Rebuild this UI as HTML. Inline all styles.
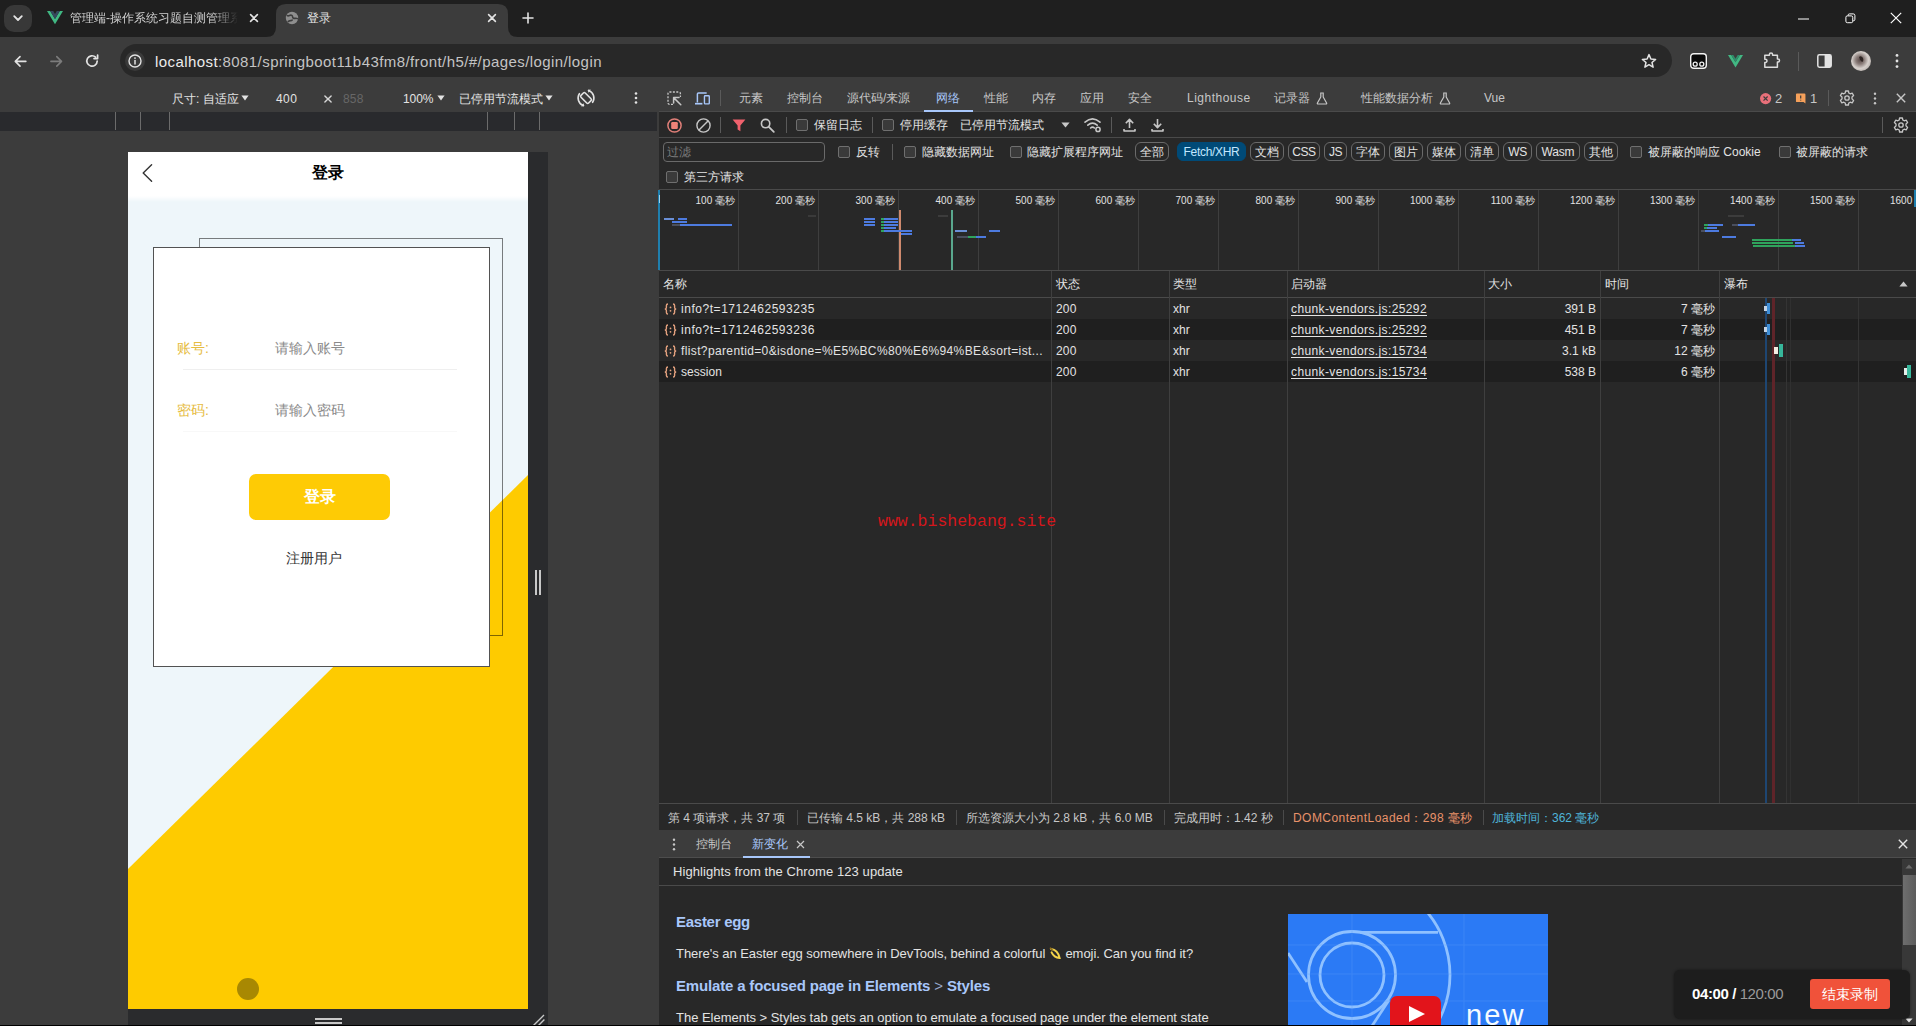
<!DOCTYPE html>
<html lang="zh">
<head>
<meta charset="utf-8">
<title>登录</title>
<style>
*{box-sizing:border-box;margin:0;padding:0}
html,body{width:1916px;height:1026px;overflow:hidden;background:#3c3c3c}
body{position:relative;font-family:"Liberation Sans",sans-serif;font-size:12px;color:#e3e3e3;line-height:1}
.a{position:absolute;white-space:nowrap}
svg{position:absolute;overflow:visible}
/* chrome frame */
#tabstrip{left:0;top:0;width:1916px;height:37px;background:#1f1f1f}
#toolbar{left:0;top:37px;width:1916px;height:47px;background:#3c3c3c}
#omni{left:120px;top:44px;width:1552px;height:33px;border-radius:17px;background:#282828}
/* device emulation */
#devbar{left:0;top:84px;width:658px;height:28px;background:#3c3c3c}
#ruler{left:0;top:112px;width:657px;height:19px;background:#292a2d}
#stage{left:0;top:131px;width:658px;height:895px;background:#3c3c3c}
#phone{left:128px;top:152px;width:400px;height:857px;background:#eef6fa;overflow:hidden}
/* devtools */
#dt{left:659px;top:84px;width:1257px;height:942px;background:#282828}
.t12{font-size:12px}

.t{position:absolute;white-space:nowrap;height:20px;line-height:20px;font-size:12px;color:#e3e3e3}
.dim{color:#c7c7c7}
.ic{stroke:#e3e3e3;fill:none;stroke-width:1.5;stroke-linecap:round;stroke-linejoin:round}

.cb{position:absolute;width:12px;height:12px;border:1px solid #6f6f6f;border-radius:2px;background:#3a3a3a}
.pill{position:absolute;height:19px;line-height:17px;padding-top:1px;border:1px solid #6a6a6a;border-radius:6px;text-align:center;font-size:12px;color:#e3e3e3;white-space:nowrap}
.vd{position:absolute;width:1px;background:#5a5a5a}

.tk{position:absolute;white-space:nowrap;height:14px;line-height:14px;font-size:10px;color:#e3e3e3;text-align:right;width:60px;top:194px}
.gl{position:absolute;top:190px;width:1px;height:80px;background:#3e3e3e}
.b{position:absolute;height:2px}
.row{position:absolute;left:659px;width:1257px;height:21px}
.lnk{text-decoration:underline;text-underline-offset:2px}
</style>
</head>
<body>
<!-- ===== TAB STRIP ===== -->
<div class="a" id="tabstrip"></div>
<div class="a" style="left:4px;top:5px;width:28px;height:27px;border-radius:10px;background:#383838"></div>
<svg style="left:12px;top:12px" width="12" height="12" viewBox="0 0 12 12"><path d="M2.2 4.2 L6 8 L9.8 4.2" stroke="#e3e3e3" stroke-width="1.8" fill="none" stroke-linecap="round" stroke-linejoin="round"/></svg>
<!-- tab 1 (inactive) -->
<svg style="left:46.5px;top:11.2px" width="16" height="13.2" viewBox="0 0 17 14"><path d="M0 0 L8.5 14 L17 0 L13.6 0 L8.5 8.5 L3.4 0 Z" fill="#41b883"/><path d="M3.4 0 L8.5 8.5 L13.6 0 L10.4 0 L8.5 3.2 L6.6 0 Z" fill="#35495e"/></svg>
<div class="t" style="left:70px;top:8px;width:168px;overflow:hidden;color:#d0d0d0;-webkit-mask-image:linear-gradient(90deg,#000 85%,transparent 100%);mask-image:linear-gradient(90deg,#000 85%,transparent 100%)">管理端-操作系统习题自测管理系统</div>
<svg style="left:249px;top:13px" width="10" height="10" viewBox="0 0 10 10"><path d="M1.6 1.6 L8.4 8.4 M8.4 1.6 L1.6 8.4" stroke="#e3e3e3" stroke-width="1.6" stroke-linecap="round"/></svg>
<!-- tab 2 (active) -->
<svg style="left:266px;top:4px" width="252" height="33" viewBox="0 0 252 33"><path d="M0 33 Q10 33 10 23 L10 10 Q10 0 20 0 L232 0 Q242 0 242 10 L242 23 Q242 33 252 33 Z" fill="#3c3c3c"/></svg>
<svg style="left:285px;top:11px" width="14" height="14" viewBox="0 0 14 14"><circle cx="7" cy="7" r="6.2" fill="#8e8e8e"/><path d="M2.2 4.6 C4 5.6 5 3.4 6.8 4.4 C8 5.2 7.2 6.6 8.4 7.2 C9.8 7.8 11 6.8 12.4 7.6 M3.2 10.6 C4.4 9 6.2 10.2 7.2 9 " stroke="#3c3c3c" stroke-width="1.6" fill="none" stroke-linecap="round"/></svg>
<div class="t" style="left:307px;top:8px">登录</div>
<svg style="left:487px;top:13px" width="10" height="10" viewBox="0 0 10 10"><path d="M1.6 1.6 L8.4 8.4 M8.4 1.6 L1.6 8.4" stroke="#e3e3e3" stroke-width="1.6" stroke-linecap="round"/></svg>
<svg style="left:522px;top:12px" width="12" height="12" viewBox="0 0 12 12"><path d="M6 1 V11 M1 6 H11" stroke="#e3e3e3" stroke-width="1.6" stroke-linecap="round"/></svg>
<!-- window controls -->
<svg style="left:1798px;top:18px" width="11" height="2" viewBox="0 0 11 2"><path d="M0 1 H11" stroke="#ffffff" stroke-width="1"/></svg>
<svg style="left:1844.6px;top:12.6px" width="10.8" height="10.8" viewBox="0 0 12 12"><rect x="1" y="3.2" width="7.6" height="7.6" rx="1.6" stroke="#fff" stroke-width="1.1" fill="none"/><path d="M3.4 3 V2.6 Q3.4 1 5 1 H9.2 Q11 1 11 2.8 V7 Q11 8.6 9.4 8.6 H9" stroke="#fff" stroke-width="1.1" fill="none"/></svg>
<svg style="left:1890px;top:12px" width="12" height="12" viewBox="0 0 12 12"><path d="M0.8 0.8 L11.2 11.2 M11.2 0.8 L0.8 11.2" stroke="#fff" stroke-width="1.2"/></svg>
<!-- ===== TOOLBAR ===== -->
<div class="a" id="toolbar"></div>
<div class="a" id="omni"></div>
<!-- nav buttons -->
<svg style="left:13.6px;top:54.6px" width="12.8" height="12.8" viewBox="0 0 14 14"><path d="M13 7 H1.6 M6.6 1.8 L1.4 7 L6.6 12.2" stroke="#e3e3e3" stroke-width="1.7" fill="none" stroke-linecap="round" stroke-linejoin="round"/></svg>
<svg style="left:49.6px;top:54.6px" width="12.8" height="12.8" viewBox="0 0 14 14"><path d="M1 7 H12.4 M7.4 1.8 L12.6 7 L7.4 12.2" stroke="#7c7c7c" stroke-width="1.7" fill="none" stroke-linecap="round" stroke-linejoin="round"/></svg>
<svg style="left:85px;top:54px" width="14" height="14" viewBox="0 0 14 14"><path d="M12.2 7 A5.2 5.2 0 1 1 10.6 3.2" stroke="#e3e3e3" stroke-width="1.7" fill="none" stroke-linecap="round"/><path d="M12.6 1 V4.6 H9" stroke="#e3e3e3" stroke-width="1.7" fill="none" stroke-linecap="round" stroke-linejoin="round"/></svg>
<div class="a" style="left:125px;top:51px;width:20px;height:20px;border-radius:10px;background:#3a3a3a"></div>
<svg style="left:128px;top:54px" width="14" height="14" viewBox="0 0 14 14"><circle cx="7" cy="7" r="6" stroke="#e3e3e3" stroke-width="1.4" fill="none"/><path d="M7 6.4 V10" stroke="#e3e3e3" stroke-width="1.5" stroke-linecap="round"/><circle cx="7" cy="4.1" r="0.9" fill="#e3e3e3"/></svg>
<div class="t" style="left:155px;top:51.5px;font-size:15px;letter-spacing:0.42px;color:#c4c4c4"><span style="color:#ececec">localhost</span>:8081/springboot11b43fm8/front/h5/#/pages/login/login</div>
<!-- right icons -->
<svg style="left:1641px;top:53px" width="16" height="16" viewBox="0 0 16 16"><path d="M8 1.6 L9.9 6 L14.6 6.4 L11 9.5 L12.1 14.2 L8 11.7 L3.9 14.2 L5 9.5 L1.4 6.4 L6.1 6 Z" stroke="#e3e3e3" stroke-width="1.5" fill="none" stroke-linejoin="round"/></svg>
<svg style="left:1690px;top:53px" width="17" height="16" viewBox="0 0 17 16"><rect x="0.7" y="0.7" width="15.6" height="14.6" rx="3" fill="#0a0a0a" stroke="#f2f2f2" stroke-width="1.4"/><circle cx="5.2" cy="11.2" r="2" fill="none" stroke="#f2f2f2" stroke-width="1.3"/><circle cx="11.8" cy="11.2" r="2" fill="none" stroke="#f2f2f2" stroke-width="1.3"/></svg>
<svg style="left:1727.5px;top:53.6px" width="15" height="14.6" viewBox="0 0 17 14"><path d="M0 0 L8.5 14 L17 0 L13.4 0 L8.5 8.2 L3.6 0 Z" fill="#42b883"/><path d="M3.6 0 L8.5 8.2 L13.4 0 L11 0 L8.5 4.2 L6 0 Z" fill="#2f8f6c"/></svg>
<svg style="left:1763px;top:52px" width="17" height="17" viewBox="0 0 17 17"><path d="M1.8 3.2 H6.4 V2.6 A1.6 1.6 0 0 1 9.6 2.6 V3.2 H14.4 V7 H15 A1.5 1.5 0 0 1 15 10 H14.4 V15.2 H1.8 V10.4 H2.4 A1.6 1.6 0 0 0 2.4 7.2 H1.8 Z" stroke="#dcdcdc" stroke-width="1.5" fill="none" stroke-linejoin="round"/></svg>
<div class="a" style="left:1798px;top:52px;width:1px;height:19px;background:#5a5a5a"></div>
<svg style="left:1817px;top:54px" width="15" height="14" viewBox="0 0 15 14"><rect x="0.8" y="0.8" width="13.4" height="12.4" rx="1.6" stroke="#e3e3e3" stroke-width="1.5" fill="none"/><rect x="7.6" y="1" width="6.4" height="12" fill="#e3e3e3"/></svg>
<svg style="left:1851px;top:51px" width="20" height="20" viewBox="0 0 20 20"><defs><radialGradient id="av" cx="0.45" cy="0.45" r="0.6"><stop offset="0" stop-color="#5a4a48"/><stop offset="0.35" stop-color="#8a7d7a"/><stop offset="0.7" stop-color="#d6d0cc"/><stop offset="1" stop-color="#b9b2ae"/></radialGradient></defs><circle cx="10" cy="10" r="10" fill="url(#av)"/><path d="M8 6 Q10 4 12 7 Q13 10 11 11 Q9 10 8 6Z" fill="#2e2523"/></svg>
<svg style="left:1895px;top:53px" width="4" height="16" viewBox="0 0 4 16"><circle cx="2" cy="2.4" r="1.4" fill="#e3e3e3"/><circle cx="2" cy="8" r="1.4" fill="#e3e3e3"/><circle cx="2" cy="13.6" r="1.4" fill="#e3e3e3"/></svg>
<!-- ===== DEVICE BAR ===== -->
<div class="a" id="devbar"></div>
<div class="t" style="left:172px;top:89px">尺寸: 自适应</div>
<svg style="left:241px;top:95px" width="8" height="6" viewBox="0 0 8 6"><path d="M0.4 0.4 H7.6 L4 5.6 Z" fill="#e3e3e3"/></svg>
<div class="t" style="left:276px;top:89px;letter-spacing:0.4px">400</div>
<svg style="left:323.5px;top:94.5px" width="8" height="8" viewBox="0 0 9 9"><path d="M1 1 L8 8 M8 1 L1 8" stroke="#d6d6d6" stroke-width="1.6" stroke-linecap="round"/></svg>
<div class="t" style="left:343px;top:89px;color:#676767;letter-spacing:0.2px">858</div>
<div class="t" style="left:403px;top:89px;letter-spacing:-0.1px">100%</div>
<svg style="left:437px;top:95px" width="8" height="6" viewBox="0 0 8 6"><path d="M0.4 0.4 H7.6 L4 5.6 Z" fill="#e3e3e3"/></svg>
<div class="t" style="left:459px;top:89px">已停用节流模式</div>
<svg style="left:545px;top:95px" width="8" height="6" viewBox="0 0 8 6"><path d="M0.4 0.4 H7.6 L4 5.6 Z" fill="#e3e3e3"/></svg>
<svg style="left:576px;top:88px" width="20" height="20" viewBox="0 0 20 20"><g transform="rotate(-45 10 10)"><rect x="7" y="4.6" width="6" height="10.8" rx="1.3" stroke="#e3e3e3" stroke-width="1.6" fill="none"/></g><path d="M3.4 5.6 A8.2 8.2 0 0 0 7.2 17.6" stroke="#e3e3e3" stroke-width="1.6" fill="none" stroke-linecap="round"/><path d="M5.2 18.4 L8.4 18 L7.4 15.2 Z" fill="#e3e3e3"/><path d="M16.6 14.4 A8.2 8.2 0 0 0 12.8 2.4" stroke="#e3e3e3" stroke-width="1.6" fill="none" stroke-linecap="round"/><path d="M14.8 1.6 L11.6 2 L12.6 4.8 Z" fill="#e3e3e3"/></svg>
<svg style="left:634px;top:91px" width="4" height="14" viewBox="0 0 4 14"><circle cx="2" cy="2.5" r="1.3" fill="#e3e3e3"/><circle cx="2" cy="7" r="1.3" fill="#e3e3e3"/><circle cx="2" cy="11.5" r="1.3" fill="#e3e3e3"/></svg>
<div class="a" id="ruler"></div>
<div class="a" style="left:115px;top:112px;width:1px;height:18px;background:#6b6b6b"></div>
<div class="a" style="left:140px;top:112px;width:1px;height:18px;background:#6b6b6b"></div>
<div class="a" style="left:169px;top:112px;width:1px;height:18px;background:#6b6b6b"></div>
<div class="a" style="left:487px;top:112px;width:1px;height:18px;background:#6b6b6b"></div>
<div class="a" style="left:514px;top:112px;width:1px;height:18px;background:#6b6b6b"></div>
<div class="a" style="left:539px;top:112px;width:1px;height:18px;background:#6b6b6b"></div>
<div class="a" id="stage"></div>
<!-- resize strips -->
<div class="a" style="left:528px;top:152px;width:20px;height:874px;background:#2a2b2d"></div>
<div class="a" style="left:128px;top:1009px;width:420px;height:17px;background:#2a2b2d"></div>
<div class="a" style="left:535px;top:570px;width:2px;height:25px;background:#c8c8c8"></div>
<div class="a" style="left:539px;top:570px;width:2px;height:25px;background:#c8c8c8"></div>
<div class="a" style="left:315px;top:1018px;width:27px;height:2px;background:#c8c8c8"></div>
<div class="a" style="left:315px;top:1022px;width:27px;height:2px;background:#c8c8c8"></div>
<svg style="left:532px;top:1014px" width="13" height="12" viewBox="0 0 13 12"><path d="M1 12 L12 1 M6 12 L12.4 5.6" stroke="#c8c8c8" stroke-width="1.4"/></svg>
<!-- ===== PHONE ===== -->
<div class="a" id="phone">
<svg style="left:0;top:0" width="400" height="857" viewBox="0 0 400 857"><path d="M400 323 L400 857 L0 857 L0 717 Z" fill="#fecb00"/></svg>
<div class="a" style="left:0;top:0;width:400px;height:44px;background:#fff"></div>
<div class="a" style="left:0;top:44px;width:400px;height:6px;background:linear-gradient(#fff,rgba(255,255,255,0))"></div>
<svg style="left:14px;top:12px" width="11" height="18" viewBox="0 0 11 18"><path d="M9.6 0.8 L1.2 9 L9.6 17.2" stroke="#333" stroke-width="1.4" fill="none" stroke-linecap="round" stroke-linejoin="round"/></svg>
<div class="t" style="left:0;top:11px;width:400px;text-align:center;font-size:16px;font-weight:700;color:#000">登录</div>
<div class="a" style="left:71px;top:86px;width:304px;height:398px;border:1px solid rgba(0,0,0,.5)"></div>
<div class="a" style="left:25px;top:95px;width:337px;height:420px;border:1px solid rgba(0,0,0,.68);background:#fff"></div>
<div class="t" style="left:49px;top:186px;font-size:14px;color:#e6bc42">账号:</div>
<div class="t" style="left:147px;top:186px;font-size:14px;color:#8a8a8a">请输入账号</div>
<div class="a" style="left:55px;top:217px;width:274px;height:1px;background:#efefef"></div>
<div class="t" style="left:49px;top:248px;font-size:14px;color:#e6bc42">密码:</div>
<div class="t" style="left:147px;top:248px;font-size:14px;color:#8a8a8a">请输入密码</div>
<div class="a" style="left:55px;top:279px;width:274px;height:1px;background:#f8f8f8"></div>
<div class="a" style="left:121px;top:322px;width:141px;height:46px;border-radius:7px;background:#fecb05"></div>
<div class="t" style="left:121px;top:335px;width:141px;text-align:center;font-size:16px;font-weight:700;color:#fff">登录</div>
<div class="t" style="left:158px;top:396px;font-size:14px;color:#333">注册用户</div>
<div class="a" style="left:109px;top:826px;width:22px;height:22px;border-radius:11px;background:#a88802"></div>
</div>
<!-- ===== DEVTOOLS ===== -->
<div class="a" id="dt"></div>
<!-- main tab bar -->
<div class="a" style="left:659px;top:84px;width:1257px;height:28px;background:#3c3c3c;border-bottom:1px solid #4a4a4a"></div>
<svg style="left:667px;top:91px" width="15" height="15" viewBox="0 0 15 15"><path d="M6 13.4 H2.6 Q1 13.4 1 11.8 V2.6 Q1 1 2.6 1 H11.8 Q13.4 1 13.4 2.6 V6" stroke="#c7c7c7" stroke-width="1.3" fill="none" stroke-dasharray="2 1.4"/><path d="M6.6 6.6 L13.8 13.8 M6.6 6.6 V12 M6.6 6.6 H12" stroke="#c7c7c7" stroke-width="1.5" fill="none" stroke-linecap="round"/></svg>
<svg style="left:694px;top:91.5px" width="17" height="13" viewBox="0 0 17 14"><path d="M3 11.4 V2.2 Q3 1 4.2 1 H13" stroke="#a8c7fa" stroke-width="1.6" fill="none"/><path d="M0.4 12.6 H8.4" stroke="#a8c7fa" stroke-width="1.8"/><rect x="10.6" y="4" width="5.2" height="8.8" rx="0.8" stroke="#a8c7fa" stroke-width="1.5" fill="none"/></svg>
<div class="vd" style="left:720px;top:90px;height:16px"></div>
<div class="t dim" style="left:739px;top:88px">元素</div>
<div class="t dim" style="left:787px;top:88px">控制台</div>
<div class="t dim" style="left:847px;top:88px">源代码/来源</div>
<div class="t" style="left:936px;top:88px;color:#a8c7fa">网络</div>
<div class="a" style="left:924px;top:110px;width:49px;height:2px;background:#a8c7fa"></div>
<div class="t dim" style="left:984px;top:88px">性能</div>
<div class="t dim" style="left:1032px;top:88px">内存</div>
<div class="t dim" style="left:1080px;top:88px">应用</div>
<div class="t dim" style="left:1128px;top:88px">安全</div>
<div class="t dim" style="left:1187px;top:88px;letter-spacing:0.5px">Lighthouse</div>
<div class="t dim" style="left:1274px;top:88px">记录器</div>
<svg style="left:1316px;top:92px" width="12" height="13" viewBox="0 0 12 13"><path d="M4.2 1 H7.8 M4.8 1 V5 L1.4 11 Q1 12 2 12 H10 Q11 12 10.6 11 L7.2 5 V1" stroke="#c7c7c7" stroke-width="1.2" fill="none" stroke-linejoin="round"/></svg>
<div class="t dim" style="left:1361px;top:88px">性能数据分析</div>
<svg style="left:1439px;top:92px" width="12" height="13" viewBox="0 0 12 13"><path d="M4.2 1 H7.8 M4.8 1 V5 L1.4 11 Q1 12 2 12 H10 Q11 12 10.6 11 L7.2 5 V1" stroke="#c7c7c7" stroke-width="1.2" fill="none" stroke-linejoin="round"/></svg>
<div class="t dim" style="left:1484px;top:88px">Vue</div>
<svg style="left:1759.6px;top:93px" width="11.2" height="11.2" viewBox="0 0 12 12"><circle cx="6" cy="6" r="6" fill="#e8707a"/><path d="M3.8 3.8 L8.2 8.2 M8.2 3.8 L3.8 8.2" stroke="#3c3c3c" stroke-width="1.3"/></svg>
<div class="t dim" style="left:1775px;top:89px;font-size:13px">2</div>
<svg style="left:1794.5px;top:93px" width="11.4" height="11.4" viewBox="0 0 12 12"><path d="M1 1.6 Q1 0.6 2 0.6 H10 Q11 0.6 11 1.6 V11 L9 9.6 H2 Q1 9.6 1 8.6 Z" fill="#f5a05a"/><path d="M6 2.6 V5.8 M6 7.2 V7.8" stroke="#3c3c3c" stroke-width="1.3"/></svg>
<div class="t dim" style="left:1810px;top:89px;font-size:13px">1</div>
<div class="vd" style="left:1828px;top:90px;height:16px"></div>
<svg style="left:1839px;top:90px" width="16" height="16" viewBox="0 0 16 16"><path d="M6.6 1 H9.4 L9.8 3 L11.2 3.8 L13.2 3.1 L14.6 5.5 L13 6.9 V8.9 L14.6 10.5 L13.2 12.9 L11.2 12.2 L9.8 13 L9.4 15 H6.6 L6.2 13 L4.8 12.2 L2.8 12.9 L1.4 10.5 L3 8.9 V6.9 L1.4 5.5 L2.8 3.1 L4.8 3.8 L6.2 3 Z" stroke="#c7c7c7" stroke-width="1.3" fill="none" stroke-linejoin="round"/><circle cx="8" cy="8" r="2.2" stroke="#c7c7c7" stroke-width="1.3" fill="none"/></svg>
<svg style="left:1873px;top:92px" width="4" height="13" viewBox="0 0 4 13"><circle cx="2" cy="1.8" r="1.2" fill="#c7c7c7"/><circle cx="2" cy="6.5" r="1.2" fill="#c7c7c7"/><circle cx="2" cy="11.2" r="1.2" fill="#c7c7c7"/></svg>
<svg style="left:1896px;top:93px" width="10" height="10" viewBox="0 0 10 10"><path d="M0.8 0.8 L9.2 9.2 M9.2 0.8 L0.8 9.2" stroke="#c7c7c7" stroke-width="1.4"/></svg>
<!-- network toolbar -->
<div class="a" style="left:659px;top:137px;width:1257px;height:1px;background:#4a4a4a"></div>
<svg style="left:667px;top:117.5px" width="15" height="15" viewBox="0 0 15 15"><circle cx="7.5" cy="7.5" r="6.6" stroke="#e07f78" stroke-width="1.5" fill="none"/><rect x="4.2" y="4" width="6.6" height="7" rx="1.2" fill="#ef8378"/></svg>
<svg style="left:695.5px;top:117.5px" width="15" height="15" viewBox="0 0 15 15"><circle cx="7.5" cy="7.5" r="6.6" stroke="#c7c7c7" stroke-width="1.4" fill="none"/><path d="M3 12 L12 3" stroke="#c7c7c7" stroke-width="1.4"/></svg>
<div class="vd" style="left:720px;top:117px;height:16px"></div>
<svg style="left:732px;top:119px" width="14" height="13" viewBox="0 0 14 13"><path d="M0.6 0.6 H13.4 L8.4 6.6 V12.2 L5.6 10.6 V6.6 Z" fill="#f0616d"/></svg>
<svg style="left:760px;top:118px" width="15" height="15" viewBox="0 0 15 15"><circle cx="5.6" cy="5.6" r="4.2" stroke="#c7c7c7" stroke-width="1.6" fill="none"/><path d="M8.8 8.8 L13.8 13.8" stroke="#c7c7c7" stroke-width="1.8" stroke-linecap="round"/></svg>
<div class="vd" style="left:786px;top:117px;height:16px"></div>
<div class="cb" style="left:796px;top:119px"></div>
<div class="t" style="left:814px;top:115px">保留日志</div>
<div class="vd" style="left:872px;top:117px;height:16px"></div>
<div class="cb" style="left:882px;top:119px"></div>
<div class="t" style="left:900px;top:115px">停用缓存</div>
<div class="t" style="left:960px;top:115px">已停用节流模式</div>
<svg style="left:1061px;top:122px" width="9" height="6" viewBox="0 0 9 6"><path d="M0.4 0.4 H8.6 L4.5 5.6 Z" fill="#c7c7c7"/></svg>
<svg style="left:1084px;top:117px" width="18" height="16" viewBox="0 0 18 16"><path d="M1 5.2 Q8.5 -1.4 16 5.2" stroke="#c7c7c7" stroke-width="1.6" fill="none" stroke-linecap="round"/><path d="M3.8 8.2 Q8.5 4 13.2 8.2" stroke="#c7c7c7" stroke-width="1.6" fill="none" stroke-linecap="round"/><path d="M6.6 11 Q8.5 9.4 10.4 11" stroke="#c7c7c7" stroke-width="1.6" fill="none" stroke-linecap="round"/><circle cx="14" cy="12.4" r="2.1" stroke="#c7c7c7" stroke-width="1.5" fill="none"/></svg>
<div class="vd" style="left:1111px;top:117px;height:16px"></div>
<svg style="left:1123px;top:118px" width="13" height="14" viewBox="0 0 13 14"><path d="M6.5 10 V1.6 M2.8 5.2 L6.5 1.4 L10.2 5.2 M1 11 V13 H12 V11" stroke="#c7c7c7" stroke-width="1.6" fill="none" stroke-linejoin="round"/></svg>
<svg style="left:1151px;top:118px" width="13" height="14" viewBox="0 0 13 14"><path d="M6.5 1 V9.4 M2.8 5.8 L6.5 9.6 L10.2 5.8 M1 11 V13 H12 V11" stroke="#c7c7c7" stroke-width="1.6" fill="none" stroke-linejoin="round"/></svg>
<div class="vd" style="left:1882px;top:117px;height:16px"></div>
<svg style="left:1893px;top:117px" width="16" height="16" viewBox="0 0 16 16"><path d="M6.6 1 H9.4 L9.8 3 L11.2 3.8 L13.2 3.1 L14.6 5.5 L13 6.9 V8.9 L14.6 10.5 L13.2 12.9 L11.2 12.2 L9.8 13 L9.4 15 H6.6 L6.2 13 L4.8 12.2 L2.8 12.9 L1.4 10.5 L3 8.9 V6.9 L1.4 5.5 L2.8 3.1 L4.8 3.8 L6.2 3 Z" stroke="#c7c7c7" stroke-width="1.3" fill="none" stroke-linejoin="round"/><circle cx="8" cy="8" r="2.2" stroke="#c7c7c7" stroke-width="1.3" fill="none"/></svg>
<!-- filter bar -->
<div class="a" style="left:663px;top:142px;width:162px;height:20px;border:1px solid #6a6a6a;border-radius:4px;background:#282828"></div>
<div class="t" style="left:667px;top:142px;color:#7d7d7d">过滤</div>
<div class="cb" style="left:838px;top:146px"></div>
<div class="t" style="left:856px;top:142px">反转</div>
<div class="vd" style="left:892px;top:144px;height:16px"></div>
<div class="cb" style="left:904px;top:146px"></div>
<div class="t" style="left:922px;top:142px">隐藏数据网址</div>
<div class="cb" style="left:1010px;top:146px"></div>
<div class="t" style="left:1027px;top:142px">隐藏扩展程序网址</div>
<div class="pill" style="left:1135px;top:142px;width:34px">全部</div>
<div class="pill" style="left:1177px;top:142px;width:69px;border-color:#004a77;background:#004a77;color:#c2e7ff;letter-spacing:-0.3px">Fetch/XHR</div>
<div class="pill" style="left:1250px;top:142px;width:34px">文档</div>
<div class="pill" style="left:1288px;top:142px;width:32px;letter-spacing:-0.4px">CSS</div>
<div class="pill" style="left:1324px;top:142px;width:23px;letter-spacing:-0.4px">JS</div>
<div class="pill" style="left:1351px;top:142px;width:34px">字体</div>
<div class="pill" style="left:1389px;top:142px;width:34px">图片</div>
<div class="pill" style="left:1427px;top:142px;width:34px">媒体</div>
<div class="pill" style="left:1465px;top:142px;width:34px">清单</div>
<div class="pill" style="left:1503px;top:142px;width:29px;letter-spacing:-0.4px">WS</div>
<div class="pill" style="left:1536px;top:142px;width:44px;letter-spacing:-0.2px">Wasm</div>
<div class="pill" style="left:1584px;top:142px;width:34px">其他</div>
<div class="cb" style="left:1630px;top:146px"></div>
<div class="t" style="left:1648px;top:142px">被屏蔽的响应 Cookie</div>
<div class="cb" style="left:1779px;top:146px"></div>
<div class="t" style="left:1796px;top:142px">被屏蔽的请求</div>
<div class="cb" style="left:666px;top:171px"></div>
<div class="t" style="left:684px;top:167px">第三方请求</div>
<!-- overview -->
<div class="a" style="left:659px;top:189px;width:1257px;height:1px;background:#4a4a4a"></div>
<div class="a" style="left:659px;top:270px;width:1257px;height:1px;background:#4a4a4a"></div>
<div class="gl" style="left:738px"></div>
<div class="tk" style="left:675px">100 毫秒</div>
<div class="gl" style="left:818px"></div>
<div class="tk" style="left:755px">200 毫秒</div>
<div class="gl" style="left:898px"></div>
<div class="tk" style="left:835px">300 毫秒</div>
<div class="gl" style="left:978px"></div>
<div class="tk" style="left:915px">400 毫秒</div>
<div class="gl" style="left:1058px"></div>
<div class="tk" style="left:995px">500 毫秒</div>
<div class="gl" style="left:1138px"></div>
<div class="tk" style="left:1075px">600 毫秒</div>
<div class="gl" style="left:1218px"></div>
<div class="tk" style="left:1155px">700 毫秒</div>
<div class="gl" style="left:1298px"></div>
<div class="tk" style="left:1235px">800 毫秒</div>
<div class="gl" style="left:1378px"></div>
<div class="tk" style="left:1315px">900 毫秒</div>
<div class="gl" style="left:1458px"></div>
<div class="tk" style="left:1395px">1000 毫秒</div>
<div class="gl" style="left:1538px"></div>
<div class="tk" style="left:1475px">1100 毫秒</div>
<div class="gl" style="left:1618px"></div>
<div class="tk" style="left:1555px">1200 毫秒</div>
<div class="gl" style="left:1698px"></div>
<div class="tk" style="left:1635px">1300 毫秒</div>
<div class="gl" style="left:1778px"></div>
<div class="tk" style="left:1715px">1400 毫秒</div>
<div class="gl" style="left:1858px"></div>
<div class="tk" style="left:1795px">1500 毫秒</div>
<div class="tk" style="left:1875px">1600 毫秒</div>
<div class="a" style="left:658px;top:190px;width:2px;height:80px;background:#1f7fae"></div>
<div class="a" style="left:659px;top:195px;width:1px;height:8px;background:#9fd3ee"></div>
<div class="a" style="left:1914px;top:190px;width:2px;height:17px;background:#1f7fae"></div>
<div class="a" style="left:899px;top:210px;width:2px;height:60px;background:#cf8a6e"></div>
<div class="a" style="left:951px;top:210px;width:2px;height:60px;background:#5aa88e"></div>
<div class="b" style="left:664px;top:218px;width:10px;background:#6a8fd6"></div>
<div class="b" style="left:678px;top:218px;width:9px;background:#4d7be0"></div>
<div class="b" style="left:672px;top:221px;width:15px;background:#4d7be0"></div>
<div class="b" style="left:672px;top:224px;width:8px;background:#4a4f5e"></div>
<div class="b" style="left:680px;top:224px;width:52px;background:#4d7be0"></div>
<div class="b" style="left:808px;top:215px;width:8px;background:#3a3a3a"></div>
<div class="b" style="left:938px;top:215px;width:10px;background:#3c3c3c"></div>
<div class="b" style="left:864px;top:218px;width:11px;background:#4d7be0"></div>
<div class="b" style="left:864px;top:221px;width:11px;background:#4d7be0"></div>
<div class="b" style="left:864px;top:224px;width:11px;background:#4d7be0"></div>
<div class="b" style="left:881px;top:218px;width:3px;background:#2fa35c"></div>
<div class="b" style="left:884px;top:218px;width:14px;background:#4d7be0"></div>
<div class="b" style="left:881px;top:221px;width:3px;background:#2fa35c"></div>
<div class="b" style="left:884px;top:221px;width:14px;background:#4d7be0"></div>
<div class="b" style="left:881px;top:224px;width:3px;background:#2fa35c"></div>
<div class="b" style="left:884px;top:224px;width:14px;background:#4d7be0"></div>
<div class="b" style="left:881px;top:227px;width:3px;background:#2fa35c"></div>
<div class="b" style="left:884px;top:227px;width:12px;background:#4d7be0"></div>
<div class="b" style="left:881px;top:230px;width:3px;background:#2fa35c"></div>
<div class="b" style="left:884px;top:230px;width:28px;background:#4d7be0"></div>
<div class="b" style="left:901px;top:233px;width:11px;background:#4d7be0"></div>
<div class="b" style="left:955px;top:230px;width:12px;background:#6a8fd6"></div>
<div class="b" style="left:989px;top:230px;width:11px;background:#4d7be0"></div>
<div class="b" style="left:957px;top:236px;width:11px;background:#4a4f5e"></div>
<div class="b" style="left:968px;top:236px;width:8px;background:#2fa35c"></div>
<div class="b" style="left:976px;top:236px;width:10px;background:#4d7be0"></div>
<div class="b" style="left:1728px;top:215px;width:16px;background:#3c3c3c"></div>
<div class="b" style="left:1704px;top:224px;width:4px;background:#2fa35c"></div>
<div class="b" style="left:1708px;top:224px;width:15px;background:#4d7be0"></div>
<div class="b" style="left:1732px;top:224px;width:6px;background:#4a4f5e"></div>
<div class="b" style="left:1738px;top:224px;width:17px;background:#4d7be0"></div>
<div class="b" style="left:1704px;top:227px;width:3px;background:#2fa35c"></div>
<div class="b" style="left:1707px;top:227px;width:10px;background:#4d7be0"></div>
<div class="b" style="left:1701px;top:230px;width:4px;background:#4a4f5e"></div>
<div class="b" style="left:1705px;top:230px;width:14px;background:#4d7be0"></div>
<div class="b" style="left:1722px;top:236px;width:14px;background:#4d7be0"></div>
<div class="b" style="left:1752px;top:239px;width:40px;background:#2fa35c"></div>
<div class="b" style="left:1792px;top:239px;width:9px;background:#4d7be0"></div>
<div class="b" style="left:1752px;top:242px;width:41px;background:#2fa35c"></div>
<div class="b" style="left:1795px;top:242px;width:9px;background:#4d7be0"></div>
<div class="b" style="left:1753px;top:245px;width:42px;background:#2fa35c"></div>
<div class="b" style="left:1795px;top:245px;width:10px;background:#4d7be0"></div>
<!-- table -->
<div class="a" style="left:659px;top:271px;width:1257px;height:26px;background:#282828"></div>
<div class="a" style="left:659px;top:297px;width:1257px;height:1px;background:#4a4a4a"></div>
<div class="row" style="top:319px;background:#1f1f1f"></div>
<div class="row" style="top:361px;background:#1f1f1f"></div>
<div class="a" style="left:1051px;top:271px;width:1px;height:532px;background:#3f3f3f"></div>
<div class="a" style="left:1169px;top:271px;width:1px;height:532px;background:#3f3f3f"></div>
<div class="a" style="left:1287px;top:271px;width:1px;height:532px;background:#3f3f3f"></div>
<div class="a" style="left:1484px;top:271px;width:1px;height:532px;background:#3f3f3f"></div>
<div class="a" style="left:1600px;top:271px;width:1px;height:532px;background:#3f3f3f"></div>
<div class="a" style="left:1719px;top:271px;width:1px;height:532px;background:#3f3f3f"></div>
<div class="t" style="left:663px;top:274px">名称</div>
<div class="t" style="left:1056px;top:274px">状态</div>
<div class="t" style="left:1173px;top:274px">类型</div>
<div class="t" style="left:1291px;top:274px">启动器</div>
<div class="t" style="left:1488px;top:274px">大小</div>
<div class="t" style="left:1605px;top:274px">时间</div>
<div class="t" style="left:1724px;top:274px">瀑布</div>
<svg style="left:1899px;top:281px" width="9" height="6" viewBox="0 0 9 6"><path d="M4.5 0.4 L8.6 5.6 H0.4 Z" fill="#c7c7c7"/></svg>
<svg style="left:664px;top:303px" width="13" height="12" viewBox="0 0 13 12"><path d="M4 1 Q2.4 1 2.4 2.6 V4.4 Q2.4 6 0.8 6 Q2.4 6 2.4 7.6 V9.4 Q2.4 11 4 11 M9 1 Q10.6 1 10.6 2.6 V4.4 Q10.6 6 12.2 6 Q10.6 6 10.6 7.6 V9.4 Q10.6 11 9 11" stroke="#e5a27f" stroke-width="1.4" fill="none"/><circle cx="6.5" cy="4.4" r="0.9" fill="#e5a27f"/><circle cx="6.5" cy="7.8" r="0.9" fill="#e5a27f"/></svg>
<div class="t" style="left:681px;top:299px;letter-spacing:0.54px">info?t=1712462593235</div>
<div class="t" style="left:1056px;top:299px;letter-spacing:0.2px">200</div>
<div class="t" style="left:1173px;top:299px">xhr</div>
<div class="t lnk" style="left:1291px;top:299px;letter-spacing:0.39px">chunk-vendors.js:25292</div>
<div class="t" style="left:1496px;top:299px;width:100px;text-align:right">391 B</div>
<div class="t" style="left:1615px;top:299px;width:100px;text-align:right">7 毫秒</div>
<svg style="left:664px;top:324px" width="13" height="12" viewBox="0 0 13 12"><path d="M4 1 Q2.4 1 2.4 2.6 V4.4 Q2.4 6 0.8 6 Q2.4 6 2.4 7.6 V9.4 Q2.4 11 4 11 M9 1 Q10.6 1 10.6 2.6 V4.4 Q10.6 6 12.2 6 Q10.6 6 10.6 7.6 V9.4 Q10.6 11 9 11" stroke="#e5a27f" stroke-width="1.4" fill="none"/><circle cx="6.5" cy="4.4" r="0.9" fill="#e5a27f"/><circle cx="6.5" cy="7.8" r="0.9" fill="#e5a27f"/></svg>
<div class="t" style="left:681px;top:320px;letter-spacing:0.54px">info?t=1712462593236</div>
<div class="t" style="left:1056px;top:320px;letter-spacing:0.2px">200</div>
<div class="t" style="left:1173px;top:320px">xhr</div>
<div class="t lnk" style="left:1291px;top:320px;letter-spacing:0.39px">chunk-vendors.js:25292</div>
<div class="t" style="left:1496px;top:320px;width:100px;text-align:right">451 B</div>
<div class="t" style="left:1615px;top:320px;width:100px;text-align:right">7 毫秒</div>
<svg style="left:664px;top:345px" width="13" height="12" viewBox="0 0 13 12"><path d="M4 1 Q2.4 1 2.4 2.6 V4.4 Q2.4 6 0.8 6 Q2.4 6 2.4 7.6 V9.4 Q2.4 11 4 11 M9 1 Q10.6 1 10.6 2.6 V4.4 Q10.6 6 12.2 6 Q10.6 6 10.6 7.6 V9.4 Q10.6 11 9 11" stroke="#e5a27f" stroke-width="1.4" fill="none"/><circle cx="6.5" cy="4.4" r="0.9" fill="#e5a27f"/><circle cx="6.5" cy="7.8" r="0.9" fill="#e5a27f"/></svg>
<div class="t" style="left:681px;top:341px;letter-spacing:0.37px">flist?parentid=0&amp;isdone=%E5%BC%80%E6%94%BE&amp;sort=ist...</div>
<div class="t" style="left:1056px;top:341px;letter-spacing:0.2px">200</div>
<div class="t" style="left:1173px;top:341px">xhr</div>
<div class="t lnk" style="left:1291px;top:341px;letter-spacing:0.39px">chunk-vendors.js:15734</div>
<div class="t" style="left:1496px;top:341px;width:100px;text-align:right">3.1 kB</div>
<div class="t" style="left:1615px;top:341px;width:100px;text-align:right">12 毫秒</div>
<svg style="left:664px;top:366px" width="13" height="12" viewBox="0 0 13 12"><path d="M4 1 Q2.4 1 2.4 2.6 V4.4 Q2.4 6 0.8 6 Q2.4 6 2.4 7.6 V9.4 Q2.4 11 4 11 M9 1 Q10.6 1 10.6 2.6 V4.4 Q10.6 6 12.2 6 Q10.6 6 10.6 7.6 V9.4 Q10.6 11 9 11" stroke="#e5a27f" stroke-width="1.4" fill="none"/><circle cx="6.5" cy="4.4" r="0.9" fill="#e5a27f"/><circle cx="6.5" cy="7.8" r="0.9" fill="#e5a27f"/></svg>
<div class="t" style="left:681px;top:362px;letter-spacing:0.04px">session</div>
<div class="t" style="left:1056px;top:362px;letter-spacing:0.2px">200</div>
<div class="t" style="left:1173px;top:362px">xhr</div>
<div class="t lnk" style="left:1291px;top:362px;letter-spacing:0.39px">chunk-vendors.js:15734</div>
<div class="t" style="left:1496px;top:362px;width:100px;text-align:right">538 B</div>
<div class="t" style="left:1615px;top:362px;width:100px;text-align:right">6 毫秒</div>
<!-- waterfall -->
<div class="a" style="left:1765px;top:298px;width:2px;height:505px;background:#1e4672"></div>
<div class="a" style="left:1772px;top:298px;width:3px;height:505px;background:#5f2429"></div>
<div class="a" style="left:1786px;top:298px;width:1px;height:505px;background:#343434"></div>
<div class="a" style="left:1790px;top:298px;width:1px;height:505px;background:#303030"></div>
<div class="a" style="left:1858px;top:298px;width:1px;height:505px;background:#343434"></div>
<div class="a" style="left:1764px;top:306px;width:3px;height:5px;background:#c3d3e6"></div><div class="a" style="left:1767px;top:303px;width:3px;height:11px;background:#3f8fd8"></div>
<div class="a" style="left:1764px;top:327px;width:3px;height:5px;background:#c3d3e6"></div><div class="a" style="left:1767px;top:324px;width:3px;height:11px;background:#3f8fd8"></div>
<div class="a" style="left:1774px;top:347px;width:4px;height:7px;background:#f3ece2"></div><div class="a" style="left:1779px;top:344px;width:4px;height:13px;background:#37b79b"></div>
<div class="a" style="left:1904px;top:368px;width:3px;height:7px;background:#e6eeea"></div><div class="a" style="left:1907px;top:365px;width:4px;height:13px;background:#37b79b"></div>
<!-- status bar -->
<div class="a" style="left:659px;top:803px;width:1257px;height:1px;background:#4a4a4a"></div>
<div class="a" style="left:659px;top:804px;width:1257px;height:26px;background:#282828"></div>
<div class="t dim" style="left:668px;top:808px">第 4 项请求，共 37 项</div>
<div class="vd" style="left:797px;top:810px;height:15px;background:#4a4a4a"></div>
<div class="t dim" style="left:807px;top:808px">已传输 4.5 kB，共 288 kB</div>
<div class="vd" style="left:956px;top:810px;height:15px;background:#4a4a4a"></div>
<div class="t dim" style="left:966px;top:808px">所选资源大小为 2.8 kB，共 6.0 MB</div>
<div class="vd" style="left:1164px;top:810px;height:15px;background:#4a4a4a"></div>
<div class="t dim" style="left:1174px;top:808px">完成用时：1.42 秒</div>
<div class="vd" style="left:1283px;top:810px;height:15px;background:#4a4a4a"></div>
<div class="t" style="left:1293px;top:808px;color:#e8926a;letter-spacing:0.45px">DOMContentLoaded：298 毫秒</div>
<div class="vd" style="left:1483px;top:810px;height:15px;background:#4a4a4a"></div>
<div class="t" style="left:1492px;top:808px;color:#4fb4d8">加载时间：362 毫秒</div>
<div class="t" style="left:878px;top:512px;font-family:'Liberation Mono',monospace;font-size:16.5px;color:#d4161c">www.bishebang.site</div>
<!-- drawer -->
<div class="a" style="left:659px;top:830px;width:1257px;height:28px;background:#3c3c3c;border-bottom:1px solid #4d4d4d"></div>
<svg style="left:672px;top:838px" width="4" height="13" viewBox="0 0 4 13"><circle cx="2" cy="1.8" r="1.2" fill="#c7c7c7"/><circle cx="2" cy="6.5" r="1.2" fill="#c7c7c7"/><circle cx="2" cy="11.2" r="1.2" fill="#c7c7c7"/></svg>
<div class="t dim" style="left:696px;top:834px">控制台</div>
<div class="t" style="left:752px;top:834px;color:#a8c7fa">新变化</div>
<svg style="left:796px;top:840px" width="9" height="9" viewBox="0 0 9 9"><path d="M1 1 L8 8 M8 1 L1 8" stroke="#c7c7c7" stroke-width="1.2"/></svg>
<div class="a" style="left:743px;top:856px;width:67px;height:2px;background:#a8c7fa"></div>
<svg style="left:1898px;top:839px" width="10" height="10" viewBox="0 0 10 10"><path d="M0.8 0.8 L9.2 9.2 M9.2 0.8 L0.8 9.2" stroke="#e3e3e3" stroke-width="1.4"/></svg>
<div class="t" style="left:673px;top:862px;font-size:13px;letter-spacing:0.08px">Highlights from the Chrome 123 update</div>
<div class="a" style="left:659px;top:885px;width:1243px;height:1px;background:#4a4a4a"></div>
<div class="t" style="left:676px;top:912px;font-size:15px;font-weight:700;color:#a8c7fa;letter-spacing:-0.27px">Easter egg</div>
<div class="t" style="left:676px;top:944px;font-size:13px;letter-spacing:-0.04px">There's an Easter egg somewhere in DevTools, behind a colorful <svg style="position:relative;display:inline-block;vertical-align:-2px" width="13" height="13" viewBox="0 0 13 13"><path d="M2 2 Q9 3 10.6 11 Q5 10.6 2.6 5.4" stroke="#f2d24a" stroke-width="2" fill="none" stroke-linecap="round"/><path d="M1.4 1.2 L3 2.6" stroke="#8a6a1a" stroke-width="1.6" stroke-linecap="round"/></svg> emoji. Can you find it?</div>
<div class="t" style="left:676px;top:976px;font-size:15px;font-weight:700;color:#a8c7fa;letter-spacing:-0.17px">Emulate a focused page in Elements <span style="font-weight:400;color:#98a9cc">&gt;</span> Styles</div>
<div class="t" style="left:676px;top:1008px;font-size:13px;letter-spacing:-0.02px">The Elements &gt; Styles tab gets an option to emulate a focused page under the element state</div>
<!-- thumbnail -->
<div class="a" style="left:1288px;top:914px;width:260px;height:112px;background:#2b7af5;overflow:hidden">
<svg style="left:0;top:0" width="260" height="112" viewBox="0 0 260 112"><g stroke="#8fc1ff" stroke-width="2.8" fill="none"><circle cx="64" cy="61" r="32"/><circle cx="64" cy="61" r="43.5"/><circle cx="64" cy="61" r="98"/><path d="M72 18.4 H150"/><path d="M0 39 L19 68"/><path d="M101 86 L84 112"/></g><g stroke="#5a9bf7" stroke-width="1" opacity="0.35"><path d="M0 31 H260 M0 60 H260 M0 87 H260 M64 0 V112 M176 0 V112"/></g><rect x="102" y="82" width="51" height="40" rx="7" fill="#e2141b"/><path d="M121 92 L137 100 L121 108 Z" fill="#fff"/></svg>
<div class="a" style="left:178px;top:87px;font-size:29px;line-height:29px;color:#f4fbff;letter-spacing:2.1px">new</div>
</div>
<!-- scrollbar -->
<div class="a" style="left:1902px;top:859px;width:14px;height:167px;background:#383838"></div>
<div class="a" style="left:1903px;top:875px;width:13px;height:70px;background:linear-gradient(90deg,#6e6e6e,#5c5c5c)"></div>
<svg style="left:1905px;top:864px" width="8" height="5" viewBox="0 0 8 5"><path d="M4 0.4 L7.6 4.6 H0.4 Z" fill="#6a6a6a"/></svg>
<svg style="left:1905px;top:1018px" width="8" height="5" viewBox="0 0 8 5"><path d="M4 4.6 L7.6 0.4 H0.4 Z" fill="#e3e3e3"/></svg>
<!-- recording overlay -->
<div class="a" style="left:1674px;top:970px;width:236px;height:49px;border-radius:6px;background:#1d1d1d;box-shadow:0 0 3px rgba(0,0,0,.45)"></div>
<div class="t" style="left:1692px;top:984px;font-size:15px;color:#fff;font-weight:700;letter-spacing:-0.4px">04:00 / <span style="font-weight:400;color:#9a9a9a">120:00</span></div>
<div class="a" style="left:1810px;top:979px;width:80px;height:30px;border-radius:3px;background:#f0523a"></div>
<div class="t" style="left:1810px;top:984px;width:80px;text-align:center;font-size:14px;color:#fff">结束录制</div>
<div class="a" style="left:0;top:1025px;width:1916px;height:1px;background:#000"></div>
</body>
</html>
